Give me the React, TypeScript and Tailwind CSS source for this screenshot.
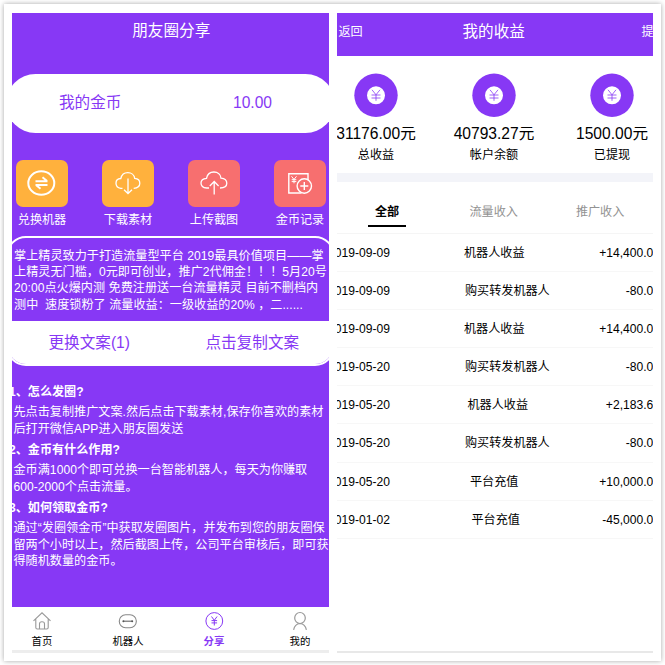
import type { ReactNode } from 'react';

interface ActionItem {
	label: string;
	color: string;
	icon: ReactNode;
}

interface RecordItem {
	date: string;
	title: string;
	offset: string;
	amount: string;
}

const ACTIONS: ActionItem[] = [
	{
		label: '兑换机器',
		color: 'bg-[#ffb13d]',
		icon: (
			<svg width="30" height="28" viewBox="0 0 30 28" fill="none" stroke="#fff" strokeWidth="2">
				<ellipse cx="14.3" cy="14" rx="13" ry="11.8" />
				<path d="M8.5 12.3H20.5M15.5 8.3L20 12M20.5 15.9H8.5M9 16L13.5 19.8" />
			</svg>
		),
	},
	{
		label: '下载素材',
		color: 'bg-[#ffb13d]',
		icon: (
			<svg width="30" height="28" viewBox="0 0 30 28" fill="none" stroke="#fff" strokeWidth="1.3">
				<path d="M9.5 19.3H7.8C5 18.9 3 17 3 14.2S5 9.6 7.8 9.5C8.6 6 11.4 3.6 14.8 3.6S21.3 5.8 21.7 9.3C24.8 9.5 26.8 11.6 26.8 14.3S24.5 19.1 20.7 19.3" />
				<path d="M15 9.5V24.5M11 20.8L15 24.5L19 20.8" />
			</svg>
		),
	},
	{
		label: '上传截图',
		color: 'bg-[#f76f6f]',
		icon: (
			<svg width="30" height="28" viewBox="0 0 30 28" fill="none" stroke="#fff" strokeWidth="1.3">
				<path d="M10 19H7.6C4.4 18.8 2 17 2 14S4.2 9.6 7.5 9.3C8.2 5.7 11 3 14.9 3S21.7 5.5 22 9.1C25.4 9.4 27.8 11.4 27.8 14.2S25.2 18.8 21 19" />
				<path d="M15.2 25.5V13M10.8 17L15.2 12.5L19.6 17" />
			</svg>
		),
	},
	{
		label: '金币记录',
		color: 'bg-[#f76f6f]',
		icon: (
			<svg width="30" height="28" viewBox="0 0 30 28" fill="none" stroke="#fff" strokeWidth="1.4">
				<path d="M23 11V4.7H3.8V24H16.5" />
				<circle cx="19.3" cy="17" r="7.2" />
				<path d="M19.3 13V21M15.3 17H23.3" />
				<path d="M6.5 7.3L9 10.5L11.5 7.3M9 10.5V14.3M6.7 10.7H11.3M6.7 12.6H11.3" strokeWidth="1" />
			</svg>
		),
	},
];

const COPY_LINES = [
	'掌上精灵致力于打造流量型平台 2019最具价值项目——掌',
	'上精灵无门槛，0元即可创业，推广2代佣金！！！5月20号',
	'20:00点火爆内测 免费注册送一台流量精灵 目前不删档内',
	'测中\u00a0 速度锁粉了 流量收益：一级收益的20% ，二......',
];

const QUESTIONS = [
	{
		title: '1、怎么发圈?',
		lines: ['先点击复制推广文案.然后点击下载素材,保存你喜欢的素材', '后打开微信APP进入朋友圈发送'],
	},
	{
		title: '2、金币有什么作用?',
		lines: ['金币满1000个即可兑换一台智能机器人，每天为你赚取', '600-2000个点击流量。'],
	},
	{
		title: '3、如何领取金币?',
		lines: [
			'通过“发圈领金币”中获取发圈图片，并发布到您的朋友圈保',
			'留两个小时以上，然后截图上传，公司平台审核后，即可获',
			'得随机数量的金币。',
		],
	},
];

const NAV_ITEMS = [
	{
		label: '首页',
		icon: (
			<svg width="20" height="20" viewBox="0 0 20 20" fill="none" stroke="#999" strokeWidth="1.1">
				<path d="M1.5 9.8L10 1.8L18.5 9.8M3.8 8.2V16.5Q3.8 18 5.3 18H14.7Q16.2 18 16.2 16.5V8.2" />
				<path d="M7.5 18V12.8Q7.5 10.8 10 10.8T12.5 12.8V18" />
			</svg>
		),
	},
	{
		label: '机器人',
		icon: (
			<svg width="20" height="20" viewBox="0 0 20 20" fill="none" stroke="#888" strokeWidth="1.1">
				<rect x="1.3" y="3.7" width="17" height="13" rx="6.3" />
				<path d="M5.5 10.2H14" stroke="#666" />
				<circle cx="5.4" cy="10.2" r="1" fill="#555" stroke="none" />
				<circle cx="14.2" cy="10.2" r="1" fill="#555" stroke="none" />
			</svg>
		),
	},
	{
		label: '分享',
		active: true,
		icon: (
			<svg width="20" height="20" viewBox="0 0 20 20" fill="none" stroke="#8738f5" strokeWidth="1">
				<circle cx="10.3" cy="10" r="8.4" />
				<path d="M7.5 5.5L10.3 9.3L13.1 5.5M10.3 9.3V14.5M7.5 9.6H13.1M7.5 11.9H13.1" />
			</svg>
		),
	},
	{
		label: '我的',
		icon: (
			<svg width="20" height="20" viewBox="0 0 20 20" fill="none" stroke="#999" strokeWidth="1.2">
				<ellipse cx="10" cy="7" rx="5.3" ry="5.5" />
				<path d="M3.6 18.8C4.3 15.2 6.5 12.8 10 12.5C13.5 12.8 15.7 15.2 16.4 18.8" />
			</svg>
		),
	},
];

const TOTALS = [
	{ value: '31176.00元', label: '总收益' },
	{ value: '40793.27元', label: '帐户余额' },
	{ value: '1500.00元', label: '已提现' },
];

const RECORDS: RecordItem[] = [
	{ date: '2019-09-09', title: '机器人收益', offset: 'ml-[72.5px]', amount: '+14,400.00' },
	{ date: '2019-09-09', title: '购买转发机器人', offset: 'ml-[73.5px]', amount: '-80.00' },
	{ date: '2019-09-09', title: '机器人收益', offset: 'ml-[72.5px]', amount: '+14,400.00' },
	{ date: '2019-05-20', title: '购买转发机器人', offset: 'ml-[73.5px]', amount: '-80.00' },
	{ date: '2019-05-20', title: '机器人收益', offset: 'ml-[76px]', amount: '+2,183.60' },
	{ date: '2019-05-20', title: '购买转发机器人', offset: 'ml-[73.5px]', amount: '-80.00' },
	{ date: '2019-05-20', title: '平台充值', offset: 'ml-[78.5px]', amount: '+10,000.00' },
	{ date: '2019-01-02', title: '平台充值', offset: 'ml-[80px]', amount: '-45,000.00' },
];

function SharePanel() {
	return (
		<section className="flex h-[640px] w-[316.5px] flex-col overflow-hidden border-b-[3px] border-[#ededed]">
			<div className="flex h-[593.5px] shrink-0 flex-col bg-[#8738f5] text-white">
				<h1 className="h-[60.5px] pt-[7px] pl-[2px] text-center text-[15.6px] leading-[22px]">朋友圈分享</h1>

				<div className="-mx-[6px] flex h-[59px] shrink-0 items-center rounded-full bg-white text-[15.6px] text-[#8738f5]">
					<span className="ml-[53px] w-[174px]">我的金币</span>
					<span>10.00</span>
				</div>

				<div className="mt-[27px] flex gap-[34px] pl-[4px]">
					{ACTIONS.map((action) => (
						<div key={action.label} className="w-[52px] shrink-0 text-center">
							<div className={`flex h-[47px] items-center justify-center rounded-[7px] ${action.color}`}>
								{action.icon}
							</div>
							<p className="mt-[4px] h-[17px] text-[12.1px] leading-[18px] whitespace-nowrap">{action.label}</p>
						</div>
					))}
				</div>

				<div className="-mx-[6px] mt-[8px] flex h-[130px] shrink-0 flex-col overflow-hidden rounded-[20px] border-2 border-white">
					<div className="grow pt-[10px] pl-[6px]">
						{COPY_LINES.map((line) => (
							<p key={line} className="text-[12.1px] leading-[16.4px] tracking-[0.04px] whitespace-nowrap">
								{line}
							</p>
						))}
					</div>
					<div className="flex h-[43px] shrink-0 items-center bg-white pt-[1px] text-[15.6px] text-[#8738f5]">
						<span className="ml-[40.5px] w-[157px]">更换文案(1)</span>
						<span>点击复制文案</span>
					</div>
				</div>

				<div className="mt-[17px]">
					{QUESTIONS.map((question) => (
						<div key={question.title}>
							<h2 className="-ml-[3px] h-[21.5px] text-[12.1px] leading-[18px] font-bold whitespace-nowrap">
								{question.title}
							</h2>
							<div className="pb-[3.5px] pl-[1.5px]">
								{question.lines.map((line) => (
									<p key={line} className="text-[12.1px] leading-[16.5px] tracking-[0.03px] whitespace-nowrap">
										{line}
									</p>
								))}
							</div>
						</div>
					))}
				</div>
			</div>

			<nav className="flex grow gap-[36px] bg-white pl-[5px]">
				{NAV_ITEMS.map((item) => (
					<div key={item.label} className="flex w-[50px] shrink-0 flex-col items-center pt-[4.5px]">
						{item.icon}
						<span
							className={`mt-[4px] text-[10.4px] leading-[14px] ${item.active ? 'font-bold text-[#8738f5]' : 'text-black'}`}
						>
							{item.label}
						</span>
					</div>
				))}
			</nav>
		</section>
	);
}

function CoinIcon() {
	return (
		<svg width="44" height="44" viewBox="0 0 44 44" fill="none">
			<circle cx="22" cy="22.3" r="21.7" fill="#8738f5" />
			<circle cx="22" cy="22.3" r="9" fill="#fff" />
			<path
				d="M18 16.8L22 21.8L26 16.8M22 21.8V27.8M17.5 22H26.5M17.5 25H26.5"
				stroke="#8738f5"
				strokeWidth="0.8"
			/>
		</svg>
	);
}

function IncomePanel() {
	return (
		<section className="flex h-[640px] w-[316.5px] flex-col overflow-hidden border-b-2 border-[#e8e8e8] bg-white text-black">
			<header className="flex h-[43px] shrink-0 bg-[#8738f5] text-[12.1px] leading-[39px] whitespace-nowrap text-white">
				<span className="ml-[2px] w-[124px] shrink-0">返回</span>
				<h1 className="w-[179px] shrink-0 text-[15.6px] leading-[38px]">我的收益</h1>
				<span>提现</span>
			</header>

			<div className="-mx-[19.5px] flex pt-[17px]">
				{TOTALS.map((total) => (
					<div key={total.label} className="flex w-[118px] shrink-0 flex-col items-center">
						<CoinIcon />
						<p className="mt-[6px] text-[15.6px] leading-[22px]">{total.value}</p>
						<p className="mt-[1px] h-[17px] text-[12.1px] leading-[18px]">{total.label}</p>
					</div>
				))}
			</div>

			<div className="mt-[10px] h-[9px] shrink-0 bg-[#f3f4f9]" />

			<div className="flex h-[52px] shrink-0 border-b border-[#f5f5f5] pt-[20px] text-[12.1px] leading-[21px] text-[#929292]">
				<span className="ml-[31.5px] h-[25px] w-[38px] border-b-2 border-black text-center font-bold text-black">
					全部
				</span>
				<span className="ml-[63.5px]">流量收入</span>
				<span className="ml-[58px]">推广收入</span>
			</div>

			{RECORDS.map((record, i) => (
				<div
					key={i}
					className="-mr-[7px] -ml-[8.5px] flex h-[38.1px] shrink-0 items-center border-b border-[#f7f7f7] pt-[1px] text-[12.1px] whitespace-nowrap"
				>
					<span className="w-[63.5px]">{record.date}</span>
					<span className={record.offset}>{record.title}</span>
					<span className="ml-auto">{record.amount}</span>
				</div>
			))}
		</section>
	);
}

export default function App() {
	return (
		<div className="h-[665px] w-[665px] overflow-hidden bg-white p-[4px] font-['Liberation_Sans','Noto_Sans_CJK_SC',sans-serif]">
			<main className="flex h-[657px] w-[657px] gap-[8px] bg-white pt-[9px] pl-[8px] shadow-[0_0_5px_rgba(0,0,0,0.35)]">
				<SharePanel />
				<IncomePanel />
			</main>
		</div>
	);
}
